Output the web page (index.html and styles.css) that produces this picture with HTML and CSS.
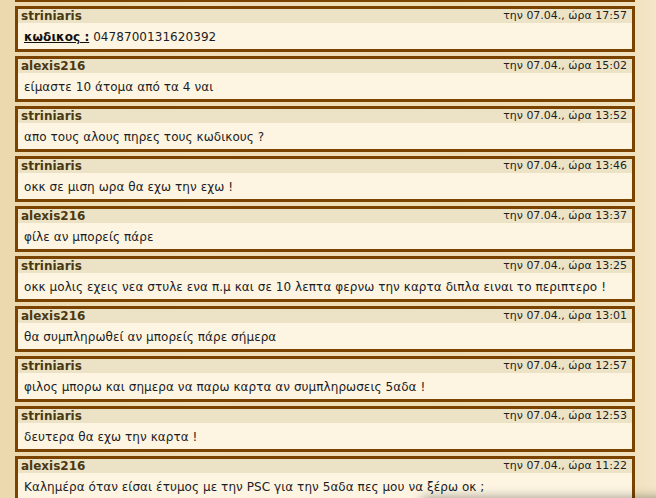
FILE: index.html
```html
<!DOCTYPE html>
<html lang="el">
<head>
<meta charset="utf-8">
<title>Chat</title>
<link rel="stylesheet" href="styles.css">
</head>
<body>
<div class="feed">
  <div class="post post-cut"></div>
  <div class="post">
    <div class="post-head"><span class="name">striniaris</span><span class="time">την 07.04., ώρα 17:57</span></div>
    <div class="post-body"><a class="code-label">κωδικος :</a> 0478700131620392</div>
  </div>
  <div class="post">
    <div class="post-head"><span class="name">alexis216</span><span class="time">την 07.04., ώρα 15:02</span></div>
    <div class="post-body">είμαστε 10 άτομα από τα 4 ναι</div>
  </div>
  <div class="post">
    <div class="post-head"><span class="name">striniaris</span><span class="time">την 07.04., ώρα 13:52</span></div>
    <div class="post-body">απο τους αλους πηρες τους κωδικους ?</div>
  </div>
  <div class="post">
    <div class="post-head"><span class="name">striniaris</span><span class="time">την 07.04., ώρα 13:46</span></div>
    <div class="post-body">οκκ σε μιση ωρα θα εχω την εχω !</div>
  </div>
  <div class="post">
    <div class="post-head"><span class="name">alexis216</span><span class="time">την 07.04., ώρα 13:37</span></div>
    <div class="post-body">φίλε αν μπορείς πάρε</div>
  </div>
  <div class="post">
    <div class="post-head"><span class="name">striniaris</span><span class="time">την 07.04., ώρα 13:25</span></div>
    <div class="post-body">οκκ μολις εχεις νεα στυλε ενα π.μ και σε 10 λεπτα φερνω την καρτα διπλα ειναι το περιπτερο !</div>
  </div>
  <div class="post">
    <div class="post-head"><span class="name">alexis216</span><span class="time">την 07.04., ώρα 13:01</span></div>
    <div class="post-body">θα συμπληρωθεί αν μπορείς πάρε σήμερα</div>
  </div>
  <div class="post">
    <div class="post-head"><span class="name">striniaris</span><span class="time">την 07.04., ώρα 12:57</span></div>
    <div class="post-body">φιλος μπορω και σημερα να παρω καρτα αν συμπληρωσεις 5αδα !</div>
  </div>
  <div class="post">
    <div class="post-head"><span class="name">striniaris</span><span class="time">την 07.04., ώρα 12:53</span></div>
    <div class="post-body">δευτερα θα εχω την καρτα !</div>
  </div>
  <div class="post">
    <div class="post-head"><span class="name">alexis216</span><span class="time">την 07.04., ώρα 11:22</span></div>
    <div class="post-body">Καλημέρα όταν είσαι έτυμος με την PSC για την 5αδα πες μου να ξέρω οκ ;</div>
  </div>
</div>
<div class="popup-shadow"></div>
</body>
</html>
```

FILE: styles.css
```css
html, body {
  margin: 0;
  padding: 0;
  height: 100%;
  overflow: hidden;
}
body {
  background: linear-gradient(90deg, #ecd9ae 0%, #efdeb8 30%, #eedcb4 70%, #f1e2c0 97%, #f3e6c8 100%);
  font-family: "DejaVu Sans", Verdana, sans-serif;
  color: #222;
}
.feed {
  display: flex;
  flex-direction: column;
  gap: 4px;
  width: 620px;
  margin: -44px 0 0 15px;
}
.post {
  border: 3px solid #7b4300;
  background: #fdf5e2;
  height: 40px;
  display: flex;
  flex-direction: column;
}
.post-head {
  height: 14px;
  background: #ece3c7;
  display: flex;
  justify-content: space-between;
  align-items: center;
  padding: 0 5px 0 3px;
}
.name {
  font-weight: bold;
  font-size: 12px;
  color: #4b3810;
  line-height: 14px;
}
.time {
  font-size: 11px;
  line-height: 14px;
  color: #1e1e1e;
}
.post-body {
  flex: 1;
  display: flex;
  align-items: center;
  padding: 2px 6px 0;
  font-size: 12px;
  line-height: 14px;
  letter-spacing: 0.06px;
  white-space: pre;
  color: #1c1c24;
}
.code-label {
  font-weight: bold;
  text-decoration: underline;
  color: #111;
}
.popup-shadow {
  position: fixed;
  left: 425px;
  top: 500px;
  width: 240px;
  height: 40px;
  background: #ddd;
  box-shadow: 0 0 10px 3px rgba(0, 0, 0, 0.35);
}
```
